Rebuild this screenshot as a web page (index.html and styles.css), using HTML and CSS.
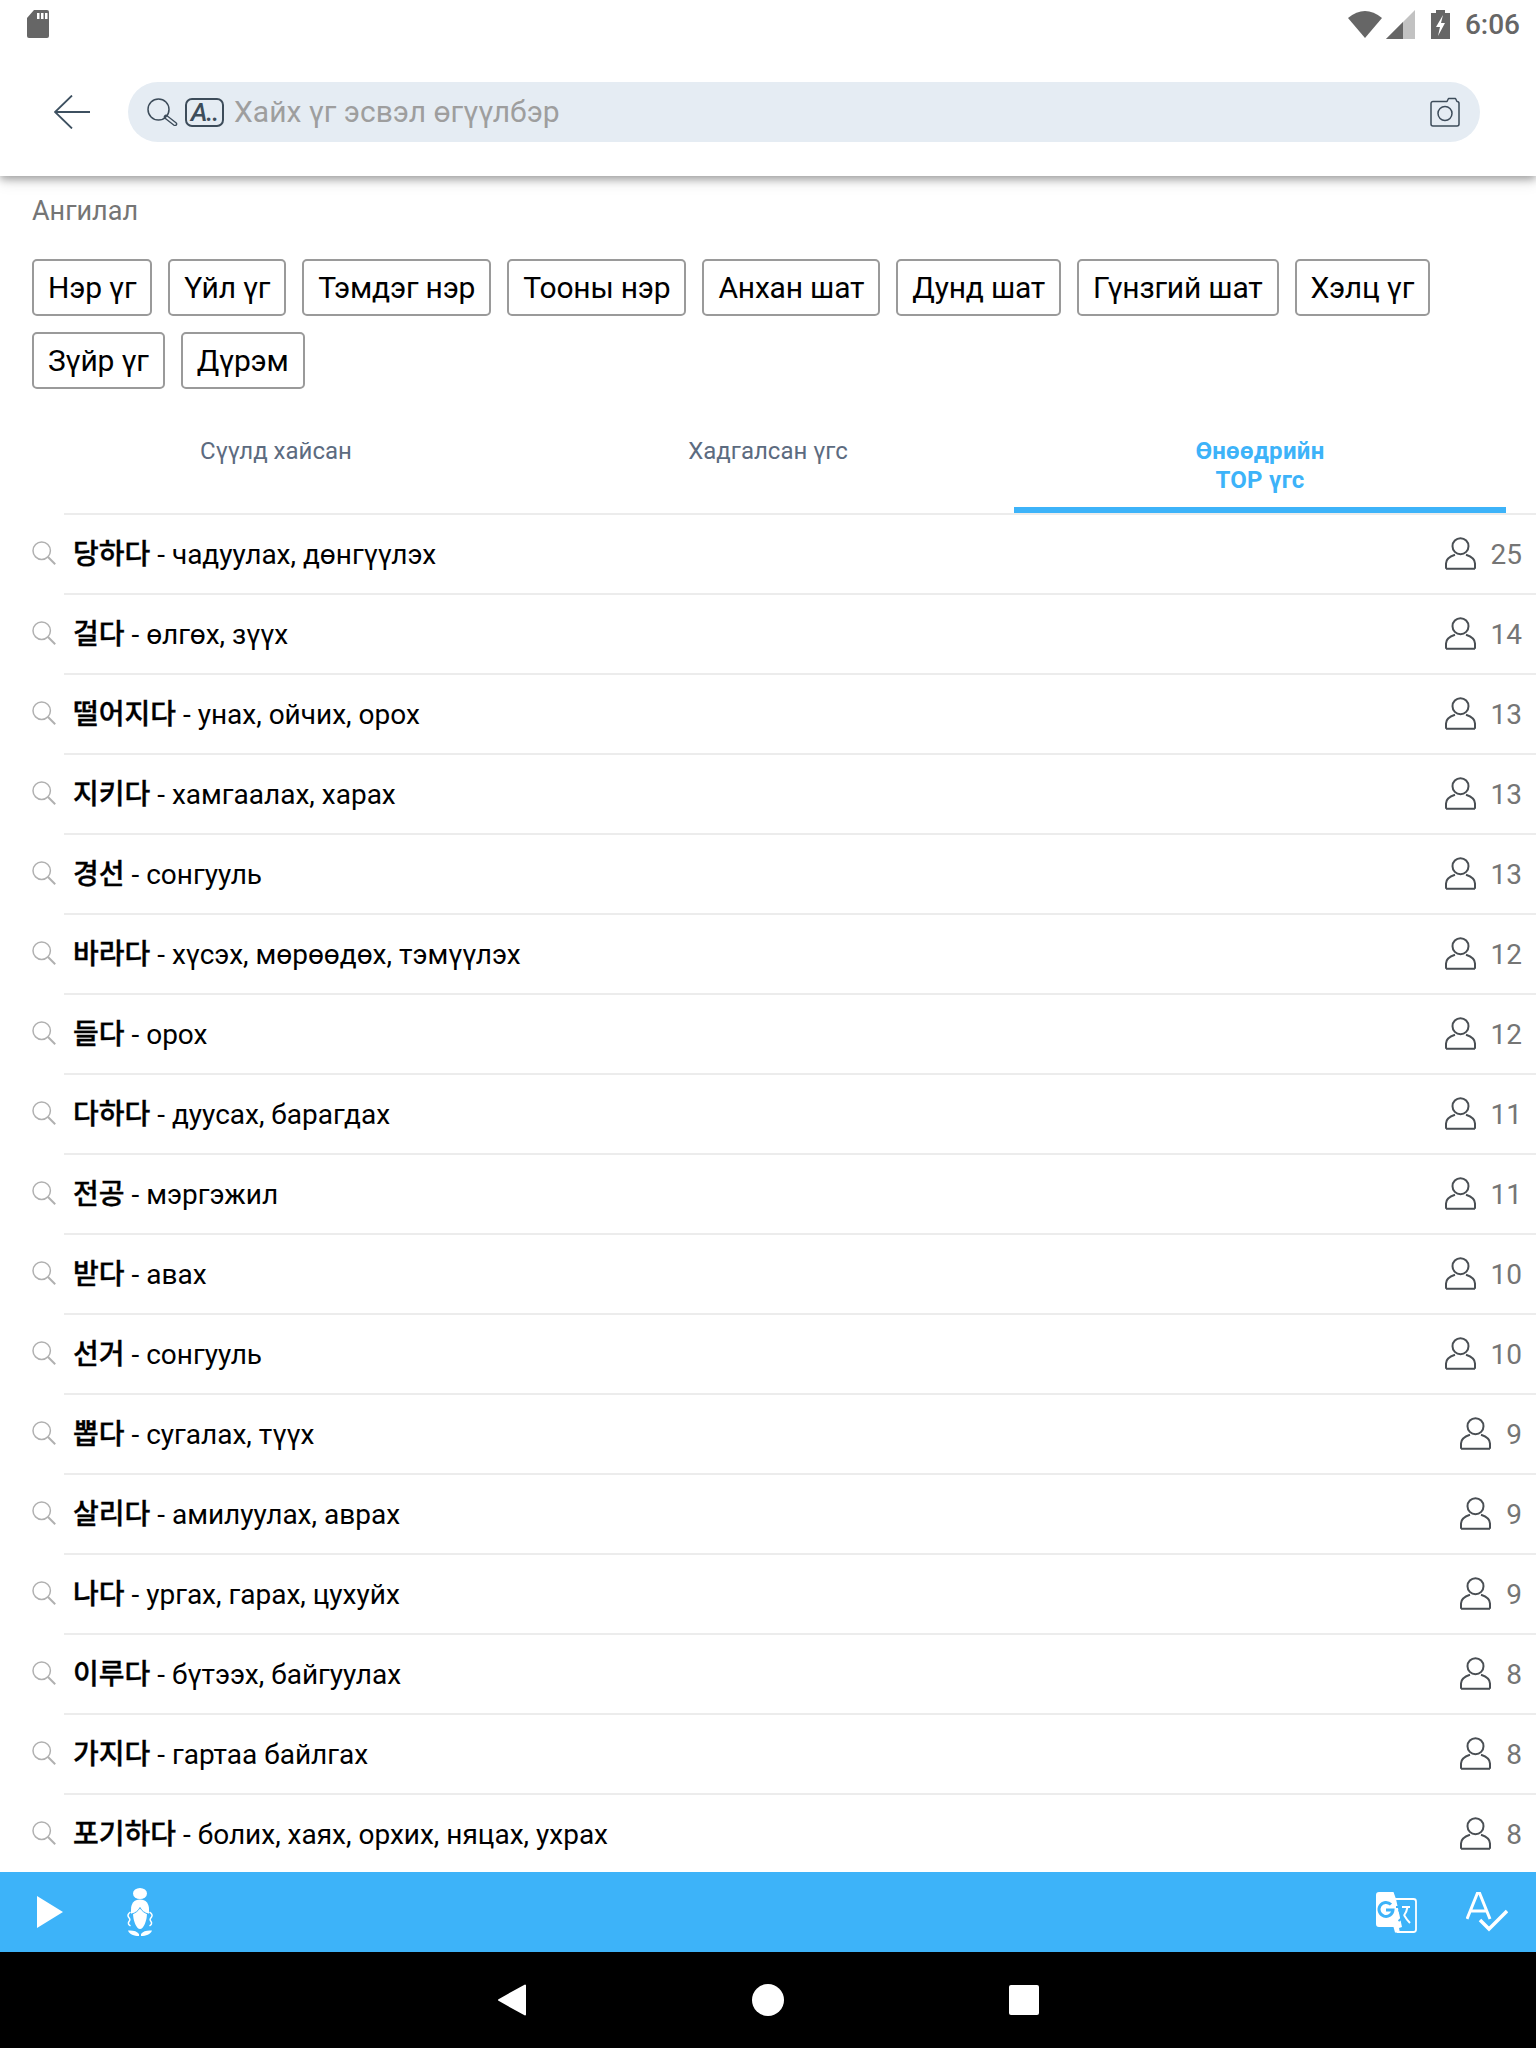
FILE: index.html
```html
<!DOCTYPE html>
<html lang="mn">
<head>
<meta charset="utf-8">
<title>Top words</title>
<link rel="stylesheet" href="styles.css">
</head>
<body>
<svg class="defs" width="0" height="0" aria-hidden="true">
  <symbol id="i-search" viewBox="0 0 24 24"><circle cx="9.7" cy="9.7" r="8.7" fill="none" stroke="#b0b0b0" stroke-width="1.5"/><path d="M16 16l7.2 7.2" fill="none" stroke="#b0b0b0" stroke-width="2"/></symbol>
  <symbol id="i-person" viewBox="0 0 31 33"><circle cx="15.5" cy="9.2" r="8" fill="none" stroke="#4a4f54" stroke-width="2"/><path d="M1 31.800v-5.300c0-5 5.500-7.500 9-8.700M30 31.800v-5.300c0-5-5.500-7.500-9-8.700M1 31.800h29" fill="none" stroke="#4a4f54" stroke-width="2" stroke-linejoin="round"/></symbol>
</svg>
<div class="app">
  <div class="status">
    <svg class="sd" width="22" height="28" viewBox="0 0 22 28"><path d="M7 0h13a2 2 0 0 1 2 2v24a2 2 0 0 1-2 2H2a2 2 0 0 1-2-2V8z" fill="#666"/><path d="M10 3h2.500v6H10zM14 3h2.500v6H14zM18 3h2.500v6H18z" fill="#fff"/></svg>
    <div class="status-right">
      <svg width="34" height="28" viewBox="0 0 34 28"><path d="M0 8Q17-6 34 8L17 28z" fill="#666"/></svg>
      <svg class="signal" width="29" height="29" viewBox="0 0 29 29"><path d="M0 29L29 0v29z" fill="#c2c2c2"/><path d="M0 29L17 12v17z" fill="#666"/></svg>
      <svg class="batt" width="19" height="29" viewBox="0 0 19 29"><path d="M5 0h9v3h5v26H0V3h5z" fill="#666"/><path d="M12 5L5 17h4L7 26l7-13h-4z" fill="#fff"/></svg>
      <span class="clock">6:06</span>
    </div>
  </div>
  <header class="topbar">
    <svg class="back" width="36" height="34" viewBox="0 0 36 34"><path d="M36 17H1M18 .5L1 17l17 16.500" fill="none" stroke="#3d5060" stroke-width="1.800"/></svg>
    <div class="pill">
      <svg class="pill-search" width="31" height="28" viewBox="0 0 31 28"><circle cx="11.500" cy="11.500" r="10.500" fill="none" stroke="#3d4c5a" stroke-width="1.500"/><path d="M19 19l9 7" fill="none" stroke="#3d4c5a" stroke-width="4.500" stroke-linecap="round"/><path d="M20 19.800l8 6.200" fill="none" stroke="#e5ecf3" stroke-width="1.800" stroke-linecap="round"/></svg>
      <span class="akey">A..</span>
      <span class="placeholder">Хайх үг эсвэл өгүүлбэр</span>
      <svg class="camera" width="30" height="30" viewBox="0 0 30 30"><path d="M3 4.500h14l1.500-3h7l1.500 3a2 2 0 0 1 2 2V27a2 2 0 0 1-2 2H3a2 2 0 0 1-2-2V6.500a2 2 0 0 1 2-2z" fill="none" stroke="#3d4c5a" stroke-width="1.500" stroke-linejoin="round"/><circle cx="15" cy="16.500" r="7" fill="none" stroke="#3d4c5a" stroke-width="1.500"/></svg>
    </div>
  </header>
  <main class="content">
    <div class="label">Ангилал</div>
    <div class="chips">
      <span class="chip">Нэр үг</span><span class="chip">Үйл үг</span><span class="chip">Тэмдэг нэр</span><span class="chip">Тооны нэр</span><span class="chip">Анхан шат</span><span class="chip">Дунд шат</span><span class="chip">Гүнзгий шат</span><span class="chip">Хэлц үг</span><span class="chip">Зүйр үг</span><span class="chip">Дүрэм</span>
    </div>
    <div class="tabs">
      <div class="tab">Сүүлд хайсан</div>
      <div class="tab">Хадгалсан үгс</div>
      <div class="tab active">Өнөөдрийн<br>TOP үгс</div>
    </div>
    <ul class="list">
      <li class="row"><svg class="row-search"><use href="#i-search"/></svg><div class="row-body"><span class="word"><b>당하다</b> - чадуулах, дөнгүүлэх</span><svg class="person"><use href="#i-person"/></svg><span class="count">25</span></div></li>
      <li class="row"><svg class="row-search"><use href="#i-search"/></svg><div class="row-body"><span class="word"><b>걸다</b> - өлгөх, зүүх</span><svg class="person"><use href="#i-person"/></svg><span class="count">14</span></div></li>
      <li class="row"><svg class="row-search"><use href="#i-search"/></svg><div class="row-body"><span class="word"><b>떨어지다</b> - унах, ойчих, орох</span><svg class="person"><use href="#i-person"/></svg><span class="count">13</span></div></li>
      <li class="row"><svg class="row-search"><use href="#i-search"/></svg><div class="row-body"><span class="word"><b>지키다</b> - хамгаалах, харах</span><svg class="person"><use href="#i-person"/></svg><span class="count">13</span></div></li>
      <li class="row"><svg class="row-search"><use href="#i-search"/></svg><div class="row-body"><span class="word"><b>경선</b> - сонгууль</span><svg class="person"><use href="#i-person"/></svg><span class="count">13</span></div></li>
      <li class="row"><svg class="row-search"><use href="#i-search"/></svg><div class="row-body"><span class="word"><b>바라다</b> - хүсэх, мөрөөдөх, тэмүүлэх</span><svg class="person"><use href="#i-person"/></svg><span class="count">12</span></div></li>
      <li class="row"><svg class="row-search"><use href="#i-search"/></svg><div class="row-body"><span class="word"><b>들다</b> - орох</span><svg class="person"><use href="#i-person"/></svg><span class="count">12</span></div></li>
      <li class="row"><svg class="row-search"><use href="#i-search"/></svg><div class="row-body"><span class="word"><b>다하다</b> - дуусах, барагдах</span><svg class="person"><use href="#i-person"/></svg><span class="count">11</span></div></li>
      <li class="row"><svg class="row-search"><use href="#i-search"/></svg><div class="row-body"><span class="word"><b>전공</b> - мэргэжил</span><svg class="person"><use href="#i-person"/></svg><span class="count">11</span></div></li>
      <li class="row"><svg class="row-search"><use href="#i-search"/></svg><div class="row-body"><span class="word"><b>받다</b> - авах</span><svg class="person"><use href="#i-person"/></svg><span class="count">10</span></div></li>
      <li class="row"><svg class="row-search"><use href="#i-search"/></svg><div class="row-body"><span class="word"><b>선거</b> - сонгууль</span><svg class="person"><use href="#i-person"/></svg><span class="count">10</span></div></li>
      <li class="row"><svg class="row-search"><use href="#i-search"/></svg><div class="row-body"><span class="word"><b>뽑다</b> - сугалах, түүх</span><svg class="person"><use href="#i-person"/></svg><span class="count">9</span></div></li>
      <li class="row"><svg class="row-search"><use href="#i-search"/></svg><div class="row-body"><span class="word"><b>살리다</b> - амилуулах, аврах</span><svg class="person"><use href="#i-person"/></svg><span class="count">9</span></div></li>
      <li class="row"><svg class="row-search"><use href="#i-search"/></svg><div class="row-body"><span class="word"><b>나다</b> - ургах, гарах, цухуйх</span><svg class="person"><use href="#i-person"/></svg><span class="count">9</span></div></li>
      <li class="row"><svg class="row-search"><use href="#i-search"/></svg><div class="row-body"><span class="word"><b>이루다</b> - бүтээх, байгуулах</span><svg class="person"><use href="#i-person"/></svg><span class="count">8</span></div></li>
      <li class="row"><svg class="row-search"><use href="#i-search"/></svg><div class="row-body"><span class="word"><b>가지다</b> - гартаа байлгах</span><svg class="person"><use href="#i-person"/></svg><span class="count">8</span></div></li>
      <li class="row"><svg class="row-search"><use href="#i-search"/></svg><div class="row-body"><span class="word"><b>포기하다</b> - болих, хаях, орхих, няцах, ухрах</span><svg class="person"><use href="#i-person"/></svg><span class="count">8</span></div></li>
    </ul>
  </main>
  <div class="bottombar">
    <svg class="play" width="26" height="32" viewBox="0 0 26 32"><path d="M0 0l26 16L0 32z" fill="#fff"/></svg>
    <svg class="lady" width="30" height="48" viewBox="0 0 30 48">
      <ellipse cx="15" cy="5.500" rx="7" ry="5.500" fill="#fff"/>
      <path d="M15 11.500c-6 0-9 4-9 10v4h18v-4c0-6-3-10-9-10z" fill="#fff"/>
      <path d="M8 25c0 8 3.500 16 7 16s7-8 7-16z" fill="#fff"/>
      <path d="M7 26c3-1 6.500-3 8-6.500 1.500 3.500 5 5.500 8 6.500" fill="none" stroke="#3db3f9" stroke-width="1"/>
      <path d="M5.500 24c-2 1.500-3.500 3-2 5s2 2.500.5 4.500 0 3.500 1.500 4.500M24.500 24c2 1.500 3.500 3 2 5s-2 2.500-.5 4.500 0 3.500-1.500 4.500" fill="none" stroke="#fff" stroke-width="1.500"/>
      <path d="M3 42.500c4.500-.5 9 .5 11 3.500v2c-5 0-9.500-1.500-11-5.500zM27 42.500c-4.500-.5-9 .5-11 3.500v2c5 0 9.500-1.500 11-5.500z" fill="#fff"/>
    </svg>
    <svg class="gt" width="41" height="41" viewBox="0 0 41 41">
      <path d="M18 7h19.500a2.500 2.500 0 0 1 2.500 2.500v28a2.500 2.500 0 0 1-2.500 2.500H21" fill="none" stroke="#fff" stroke-width="1.800"/>
      <path d="M3 0h14.500L20 7l6 28-3 1 1 5-5-.5-1.500-5.500H3a3 3 0 0 1-3-3V3a3 3 0 0 1 3-3z" fill="#fff"/>
      <path d="M15 12.500a7 7 0 1 0 2 5.500H10" fill="none" stroke="#3db3f9" stroke-width="3"/>
      <path d="M20 15h14M27 12v3M31.500 15c-1 6-4.500 11-9 14M23 18c2 5 6 10 11 13" stroke="#3db3f9" stroke-width="2" fill="none"/>
      <path d="M26 15h8M31.500 15c-.5 3-1.500 6-3.500 8.500M28 23c2 3.500 4 6 6 8" stroke="#fff" stroke-width="2" fill="none"/>
    </svg>
    <svg class="spell" width="42" height="40" viewBox="0 0 42 40"><path d="M1 27L11.500 1h2L24 27M5 19h15" fill="none" stroke="#fff" stroke-width="3"/><path d="M14 28l9 9L41 19" fill="none" stroke="#fff" stroke-width="3.500"/></svg>
  </div>
  <nav class="navbar">
    <span class="nav-slot"><svg width="28" height="32" viewBox="0 0 28 32"><path d="M27 1.500v29L1 16z" fill="#fff" stroke="#fff" stroke-width="2" stroke-linejoin="round"/></svg></span>
    <span class="nav-slot"><svg width="32" height="32" viewBox="0 0 32 32"><circle cx="16" cy="16" r="16" fill="#fff"/></svg></span>
    <span class="nav-slot"><svg width="30" height="30" viewBox="0 0 30 30"><rect width="30" height="30" rx="2" fill="#fff"/></svg></span>
  </nav>
</div>
</body>
</html>
```

FILE: styles.css
```css
* { box-sizing: border-box; }
html, body { margin: 0; padding: 0; background: #fff; }
body { font-family: Roboto, "Noto Sans CJK KR", sans-serif; color: #000; }
.defs { display: block; height: 0; }
.app { width: 1536px; height: 2048px; display: flex; flex-direction: column; overflow: hidden; }

.status { height: 48px; flex: none; display: flex; align-items: flex-start; justify-content: space-between; padding: 10px 16px 0 27px; background: #fff; position: relative; z-index: 2; }
.status-right { display: flex; align-items: flex-start; }
.signal { margin-left: 4px; }
.batt { margin-left: 16px; }
.clock { margin-left: 15px; font-size: 28px; line-height: 30px; font-weight: 500; color: #666; }

.topbar { height: 128px; flex: none; display: flex; align-items: flex-start; padding: 34px 56px 0 54px; background: #fff; box-shadow: 0 3px 8px rgba(0,0,0,.32), 0 6px 14px rgba(0,0,0,.1); position: relative; z-index: 1; }
.back { margin-top: 13px; flex: none; }
.pill { margin-left: 38px; flex: 1; height: 60px; border-radius: 30px; background: #e5ecf3; display: flex; align-items: center; padding: 0 20px 0 19px; }
.pill-search { flex: none; }
.akey { margin-left: 7px; flex: none; width: 39px; height: 29px; border: 2px solid #3d4c5a; border-radius: 7px; font-size: 26px; line-height: 25px; font-style: italic; font-weight: 500; text-align: center; letter-spacing: -1px; color: #3d4c5a; }
.placeholder { margin-left: 10px; padding-bottom: 2px; flex: 1; font-size: 30px; color: #9e9e9e; }
.camera { flex: none; }

.content { flex: 1; min-height: 0; overflow: hidden; }
.label { padding: 18px 32px 0; font-size: 27px; line-height: 34px; color: #757575; }
.chips { display: flex; flex-wrap: wrap; gap: 16px; padding: 31px 32px 0; }
.chip { height: 57px; padding: 0 14px; border: 2px solid #9a9a9a; border-radius: 5px; font-size: 30px; line-height: 53px; letter-spacing: -.2px; color: #000; }
.tabs { display: flex; margin: 48px 30px 0; }
.tab { flex: 1; height: 76px; text-align: center; font-size: 24px; line-height: 29px; color: #5c6b80; }
.tab.active { color: #3db3f9; font-weight: 700; letter-spacing: .3px; border-bottom: 6px solid #3db3f9; }

.list { list-style: none; margin: 0; padding: 0; }
.row { height: 80px; display: flex; align-items: center; padding-left: 32px; }
.row-search { width: 24px; height: 24px; flex: none; }
.row-body { flex: 1; height: 80px; margin-left: 8px; padding: 0 14px 1px 9px; border-top: 2px solid #ececec; display: flex; align-items: center; }
.word { flex: 1; margin-bottom: 1px; font-size: 28px; line-height: 36px; white-space: nowrap; color: #000; }
.word b { font-family: "Noto Sans CJK KR", sans-serif; font-weight: 500; -webkit-text-stroke: .35px #000; }
.person { width: 31px; height: 33px; flex: none; }
.count { margin: 2px 0 0 15px; font-size: 28px; color: #757575; }

.bottombar { height: 80px; flex: none; background: #3db3f9; display: flex; align-items: center; padding: 0 28px 0 37px; }
.lady { margin-left: 62px; }
.gt { margin-left: auto; }
.spell { margin-left: 49px; }

.navbar { height: 96px; flex: none; background: #000; display: flex; justify-content: center; align-items: center; }
.nav-slot { width: 256px; display: flex; justify-content: center; }
```
